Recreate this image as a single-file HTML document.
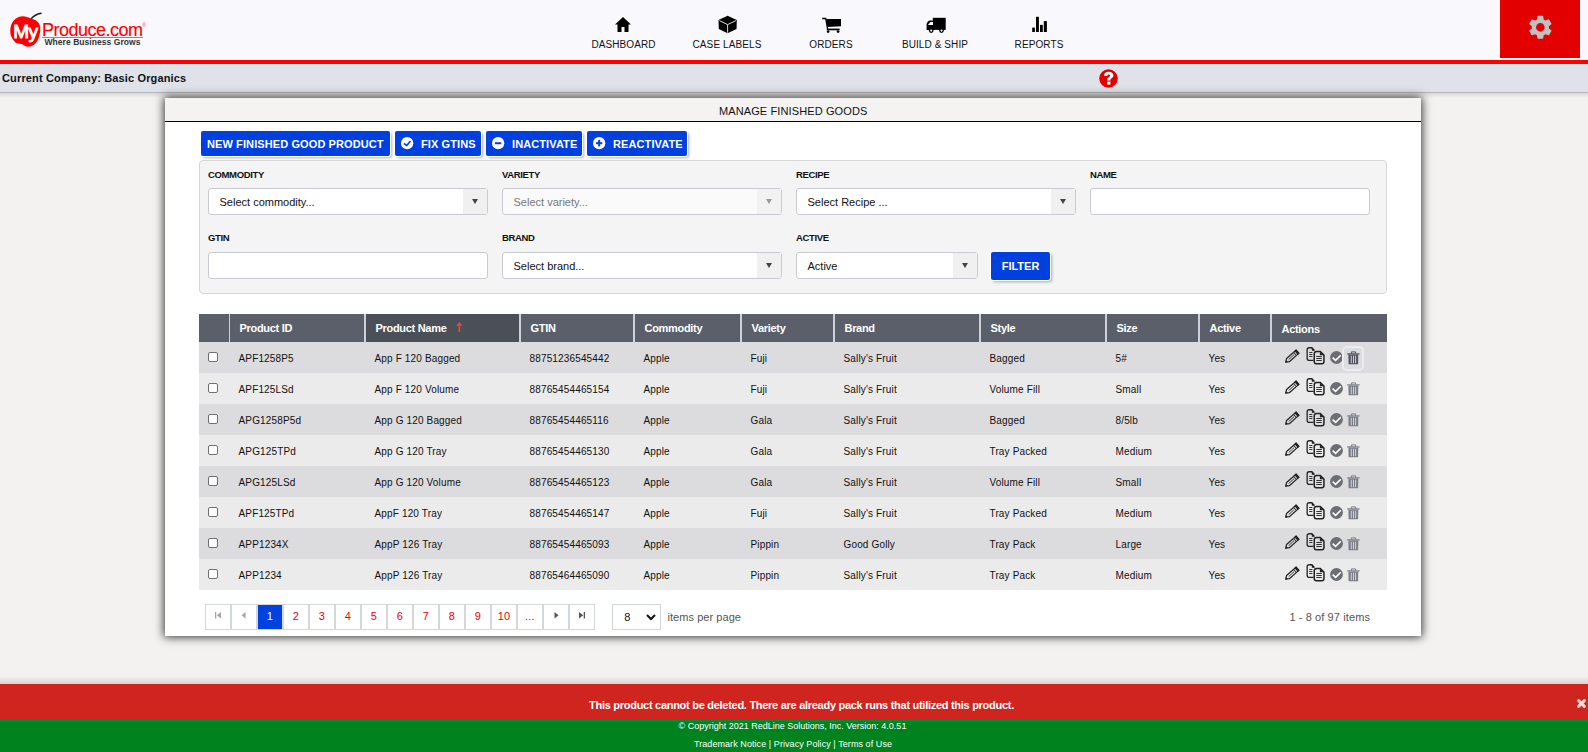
<!DOCTYPE html>
<html><head><meta charset="utf-8">
<style>
*{box-sizing:border-box;margin:0;padding:0}
html,body{width:1588px;height:752px;overflow:hidden;background:#f3f2f0;font-family:"Liberation Sans", sans-serif;color:#000}
body{position:relative}
.t{position:absolute;white-space:nowrap}
.b{position:absolute}
svg{position:absolute;overflow:visible}
</style></head><body>
<div class="b" style="left:0px;top:0px;width:1588px;height:60px;background:#f9f9fd"></div>
<div class="b" style="left:0px;top:60px;width:1588px;height:4px;background:#fe0000"></div>
<div class="b" style="left:0px;top:64px;width:1588px;height:29px;background:#dfe2e9;border-bottom:1px solid #b4b7bd"></div>
<div class="b" style="left:0px;top:93px;width:1588px;height:5px;background:linear-gradient(#d9d8d6,#f3f2f0)"></div>
<div class="t" style="left:2px;top:72.69px;font-size:11px;line-height:11px;font-weight:bold;color:#111;letter-spacing:0.15px;">Current Company: Basic Organics</div>
<svg style="left:0;top:0" width="160" height="60" viewBox="0 0 160 60">
<path d="M31 19 C33.5 16 37 14 41 13.3" stroke="#222" stroke-width="1.5" fill="none" stroke-linecap="round"/>
<path d="M39 13.6 L41.3 13 L41 14.3 Z" fill="#222"/>
<path d="M21.4 16.4 C25 16 28.5 17.5 31 18.8 C32.5 19 33.5 19.4 34.7 19.8 C38.5 21.5 40.8 25.5 40.3 30 C40 35 38.5 40 35.8 43 C33 46 30 47 27.3 46.7 C25 46.5 23.5 44.5 21.4 44 C19 43.5 16.5 43.5 15 41.9 C11.5 38.5 10 34.5 10.3 30.5 C10.5 22 15.5 16.8 21.4 16.4 Z" fill="#fe0000"/>
</svg>
<div class="t" style="left:13.2px;top:21.62px;font-size:19px;line-height:19px;color:#fff;letter-spacing:-0.6px;-webkit-text-stroke:0.9px #fff;">My</div>
<div class="t" style="left:42px;top:20.56px;font-size:18px;line-height:18px;color:#fe0000;letter-spacing:-0.5px;-webkit-text-stroke:0.15px #fe0000;">Produce.com</div>
<div class="b" style="left:42px;top:37px;width:101px;height:1px;background:#8a8a8a"></div>
<div class="t" style="left:44.5px;top:37.60px;font-size:8.5px;line-height:8.5px;font-weight:bold;color:#333;letter-spacing:0.05px;">Where Business Grows</div>
<div class="t" style="left:142.3px;top:22.77px;font-size:5px;line-height:5px;color:#f44;">&#174;</div>
<svg style="left:615.1px;top:17px" width="16" height="15" viewBox="0 0 16 15"><path d="M8 0 L16 7.5 L13.5 7.5 L13.5 15 L9.5 15 L9.5 10 L6.5 10 L6.5 15 L2.5 15 L2.5 7.5 L0 7.5 Z" fill="#000"/></svg>
<div class="t" style="left:563.5px;width:120px;text-align:center;top:40.03px;font-size:10px;line-height:10px;color:#111;letter-spacing:0.1px;">DASHBOARD</div>
<div class="t" style="left:667.0px;width:120px;text-align:center;top:40.03px;font-size:10px;line-height:10px;color:#111;letter-spacing:0.1px;">CASE LABELS</div>
<div class="t" style="left:771.0px;width:120px;text-align:center;top:40.03px;font-size:10px;line-height:10px;color:#111;letter-spacing:0.1px;">ORDERS</div>
<div class="t" style="left:875.0px;width:120px;text-align:center;top:40.03px;font-size:10px;line-height:10px;color:#111;letter-spacing:0.1px;">BUILD &amp; SHIP</div>
<div class="t" style="left:979.0px;width:120px;text-align:center;top:40.03px;font-size:10px;line-height:10px;color:#111;letter-spacing:0.1px;">REPORTS</div>
<svg style="left:815px;top:10px" width="40" height="30" viewBox="0 0 40 30">
<path d="M7.2 8.5 L10.7 8.5 L12.6 19.2" stroke="#000" stroke-width="1.3" fill="none"/>
<path d="M11.1 9.1 L26 9.1 L26 16.3 L12.4 17.1 Z" fill="#000"/>
<rect x="11.8" y="18.6" width="12.8" height="1.7" fill="#000"/>
<circle cx="13.1" cy="21.6" r="1.35" fill="#000"/><circle cx="23.1" cy="21.6" r="1.35" fill="#000"/>
</svg>
<svg style="left:1025px;top:12px" width="30" height="24" viewBox="0 0 30 24"><rect x="7.2" y="15.6" width="2.7" height="4.4" fill="#000"/><rect x="11" y="4.8" width="2.9" height="15.2" fill="#000"/><rect x="15" y="12.9" width="2.8" height="7.1" fill="#000"/><rect x="18.8" y="9.1" width="3.1" height="10.9" fill="#000"/></svg>
<svg style="left:710px;top:10px" width="30" height="26" viewBox="0 0 30 26"><path d="M17.6 5.7 L26.8 10 L26.5 19 L17.6 23.2 L8.8 19 L8.5 10 Z" fill="#000"/><path d="M9.4 10.6 L17.6 14.6 L25.9 10.6" stroke="#fff" stroke-width="0.85" fill="none"/><path d="M17.6 14.6 L17.6 22.8" stroke="#fff" stroke-width="0.85"/></svg>
<svg style="left:920px;top:10px" width="40" height="30" viewBox="0 0 40 30">
<rect x="12.8" y="7.8" width="12.9" height="12.1" fill="#000"/>
<path d="M6.6 20 L6.6 14.5 C6.6 12.6 8.4 10.6 10.2 10.6 L13 10.6 L13 20 Z" fill="#000"/>
<path d="M7.9 15 L10.4 11.9 L13 11.9 L13 15 Z" fill="#fff"/>
<circle cx="11.2" cy="20.6" r="2.35" fill="#000"/><circle cx="21.5" cy="20.6" r="2.35" fill="#000"/>
<circle cx="11.2" cy="20.6" r="1.05" fill="#fff"/><circle cx="21.5" cy="20.6" r="1.05" fill="#fff"/>
</svg>
<div class="b" style="left:1500px;top:0px;width:80px;height:58px;background:#e30000"></div>
<svg style="left:1525.95px;top:13.15px" width="28.7" height="28.7" viewBox="0 0 24 24"><path fill="#c1c1c1" d="M19.14 12.94c.04-.3.06-.61.06-.94 0-.32-.02-.64-.07-.94l2.03-1.58a.49.49 0 0 0 .12-.61l-1.92-3.32a.488.488 0 0 0-.59-.22l-2.39.96c-.5-.38-1.03-.7-1.62-.94l-.36-2.54a.484.484 0 0 0-.48-.41h-3.84c-.24 0-.43.17-.47.41l-.36 2.540c-.59.24-1.13.57-1.62.94l-2.39-.96c-.22-.08-.47 0-.59.22L2.74 8.87c-.12.21-.08.47.12.61l2.03 1.58c-.05.3-.09.63-.09.94s.02.64.07.94l-2.03 1.58a.49.49 0 0 0-.12.61l1.92 3.32c.12.22.37.29.59.22l2.39-.96c.5.38 1.030.7 1.62.94l.36 2.54c.05.24.24.41.48.41h3.84c.24 0 .44-.17.47-.41l.36-2.54c.59-.24 1.13-.56 1.62-.94l2.39.96c.22.08.47 0 .59-.22l1.92-3.32c.12-.22.07-.47-.12-.61l-2.01-1.58zM12 15.6c-1.98 0-3.6-1.62-3.6-3.6s1.62-3.6 3.6-3.6 3.6 1.62 3.6 3.6-1.62 3.6-3.6 3.6z"/></svg>
<svg style="left:1099px;top:68.5px" width="19" height="19" viewBox="0 0 19 19"><circle cx="9.5" cy="9.5" r="9.3" fill="#e30000"/><path d="M5 6.8 C5 4.2 7 2.8 9.6 2.8 C12.4 2.8 14.4 4.4 14.4 6.6 C14.4 9 11.4 9.4 11.4 11 L11.4 11.4 L8.2 11.4 L8.2 10.6 C8.2 8.2 11.1 7.9 11.1 6.7 C11.1 6 10.5 5.5 9.6 5.5 C8.7 5.5 8.2 6.1 8.2 6.9 Z" fill="#fff"/><rect x="8.2" y="12.6" width="3.2" height="3" fill="#fff"/></svg>
<div class="b" style="left:165px;top:98px;width:1256px;height:538px;background:#fff;box-shadow:0 0 9px 1px rgba(0,0,0,.8)"></div>
<div class="b" style="left:165px;top:98px;width:1256px;height:23px;background:#f4f3f1"></div>
<div class="b" style="left:165px;top:121px;width:1256px;height:1px;background:#000"></div>
<div class="t" style="left:643.2px;width:300px;text-align:center;top:105.69px;font-size:11px;line-height:11px;color:#111;letter-spacing:0.12px;">MANAGE FINISHED GOODS</div>
<div class="b" style="left:201px;top:131px;width:189px;height:25px;background:#0040df;border-radius:2px;box-shadow:0 0 0 1px #fff,2px 2px 3px rgba(0,0,0,.3)"></div>
<div class="t" style="left:207px;top:138.69px;font-size:11px;line-height:11px;font-weight:bold;color:#fff;letter-spacing:0.1px;">NEW FINISHED GOOD PRODUCT</div>
<div class="b" style="left:395px;top:131px;width:86px;height:25px;background:#0040df;border-radius:2px;box-shadow:0 0 0 1px #fff,2px 2px 3px rgba(0,0,0,.3)"></div>
<svg style="left:400.95000000000005px;top:136.8px" width="12.3" height="12.3" viewBox="0 0 12.3 12.3"><circle cx="6.15" cy="6.15" r="6.15" fill="#fff"/><path d="M2.9 6.5 L5.85 8.5 L9.4 4.1" stroke="#0040df" stroke-width="1.6" fill="none"/></svg>
<div class="t" style="left:421px;top:138.69px;font-size:11px;line-height:11px;font-weight:bold;color:#fff;letter-spacing:0.1px;">FIX GTINS</div>
<div class="b" style="left:486px;top:131px;width:96px;height:25px;background:#0040df;border-radius:2px;box-shadow:0 0 0 1px #fff,2px 2px 3px rgba(0,0,0,.3)"></div>
<svg style="left:491.95000000000005px;top:136.8px" width="12.3" height="12.3" viewBox="0 0 12.3 12.3"><circle cx="6.15" cy="6.15" r="6.15" fill="#fff"/><rect x="3" y="5.2" width="6.3" height="2" fill="#0040df"/></svg>
<div class="t" style="left:512px;top:138.69px;font-size:11px;line-height:11px;font-weight:bold;color:#fff;letter-spacing:0.1px;">INACTIVATE</div>
<div class="b" style="left:587px;top:131px;width:100px;height:25px;background:#0040df;border-radius:2px;box-shadow:0 0 0 1px #fff,2px 2px 3px rgba(0,0,0,.3)"></div>
<svg style="left:592.95px;top:136.8px" width="12.3" height="12.3" viewBox="0 0 12.3 12.3"><circle cx="6.15" cy="6.15" r="6.15" fill="#fff"/><rect x="3" y="5.2" width="6.3" height="2" fill="#0040df"/><rect x="5.15" y="3" width="2" height="6.4" fill="#0040df"/></svg>
<div class="t" style="left:613px;top:138.69px;font-size:11px;line-height:11px;font-weight:bold;color:#fff;letter-spacing:0.1px;">REACTIVATE</div>
<div class="b" style="left:199px;top:160px;width:1188px;height:134px;background:#f4f4f4;border:1px solid #d6d6d6;border-radius:4px"></div>
<div class="t" style="left:208px;top:169.96px;font-size:9.5px;line-height:9.5px;font-weight:bold;color:#111;letter-spacing:-0.35px;">COMMODITY</div>
<div class="t" style="left:502px;top:169.96px;font-size:9.5px;line-height:9.5px;font-weight:bold;color:#111;letter-spacing:-0.35px;">VARIETY</div>
<div class="t" style="left:796px;top:169.96px;font-size:9.5px;line-height:9.5px;font-weight:bold;color:#111;letter-spacing:-0.35px;">RECIPE</div>
<div class="t" style="left:1090px;top:169.96px;font-size:9.5px;line-height:9.5px;font-weight:bold;color:#111;letter-spacing:-0.35px;">NAME</div>
<div class="t" style="left:208px;top:232.96px;font-size:9.5px;line-height:9.5px;font-weight:bold;color:#111;letter-spacing:-0.35px;">GTIN</div>
<div class="t" style="left:502px;top:232.96px;font-size:9.5px;line-height:9.5px;font-weight:bold;color:#111;letter-spacing:-0.35px;">BRAND</div>
<div class="t" style="left:796px;top:232.96px;font-size:9.5px;line-height:9.5px;font-weight:bold;color:#111;letter-spacing:-0.35px;">ACTIVE</div>
<div class="b" style="left:208px;top:188px;width:280px;height:27px;background:#fff;border:1px solid #c8ccd2;border-radius:3px;overflow:hidden"></div>
<div class="b" style="left:463px;top:189px;width:24px;height:25px;background:#f0f0f0"></div>
<svg style="left:472px;top:199px" width="6" height="5" viewBox="0 0 6 5"><path d="M0 0 L6 0 L3 5 Z" fill="#444"/></svg>
<div class="t" style="left:219.5px;top:197.19px;font-size:11px;line-height:11px;color:#111;">Select commodity...</div>
<div class="b" style="left:502px;top:188px;width:280px;height:27px;background:#fafafa;border:1px solid #c8ccd2;border-radius:3px;overflow:hidden"></div>
<div class="b" style="left:757px;top:189px;width:24px;height:25px;background:#f2f2f2"></div>
<svg style="left:766px;top:199px" width="6" height="5" viewBox="0 0 6 5"><path d="M0 0 L6 0 L3 5 Z" fill="#999"/></svg>
<div class="t" style="left:513.5px;top:197.19px;font-size:11px;line-height:11px;color:#777;">Select variety...</div>
<div class="b" style="left:796px;top:188px;width:280px;height:27px;background:#fff;border:1px solid #c8ccd2;border-radius:3px;overflow:hidden"></div>
<div class="b" style="left:1051px;top:189px;width:24px;height:25px;background:#f0f0f0"></div>
<svg style="left:1060px;top:199px" width="6" height="5" viewBox="0 0 6 5"><path d="M0 0 L6 0 L3 5 Z" fill="#444"/></svg>
<div class="t" style="left:807.5px;top:197.19px;font-size:11px;line-height:11px;color:#111;">Select Recipe ...</div>
<div class="b" style="left:1090px;top:188px;width:280px;height:27px;background:#fff;border:1px solid #c8ccd2;border-radius:3px"></div>
<div class="b" style="left:208px;top:252px;width:280px;height:27px;background:#fff;border:1px solid #c8ccd2;border-radius:3px"></div>
<div class="b" style="left:502px;top:252px;width:280px;height:27px;background:#fff;border:1px solid #c8ccd2;border-radius:3px;overflow:hidden"></div>
<div class="b" style="left:757px;top:253px;width:24px;height:25px;background:#f0f0f0"></div>
<svg style="left:766px;top:263px" width="6" height="5" viewBox="0 0 6 5"><path d="M0 0 L6 0 L3 5 Z" fill="#444"/></svg>
<div class="t" style="left:513.5px;top:261.19px;font-size:11px;line-height:11px;color:#111;">Select brand...</div>
<div class="b" style="left:796px;top:252px;width:182px;height:27px;background:#fff;border:1px solid #c8ccd2;border-radius:3px;overflow:hidden"></div>
<div class="b" style="left:953px;top:253px;width:24px;height:25px;background:#f0f0f0"></div>
<svg style="left:962px;top:263px" width="6" height="5" viewBox="0 0 6 5"><path d="M0 0 L6 0 L3 5 Z" fill="#444"/></svg>
<div class="t" style="left:807.5px;top:261.19px;font-size:11px;line-height:11px;color:#111;">Active</div>
<div class="b" style="left:991px;top:252px;width:59px;height:28px;background:#0040df;border-radius:2px;box-shadow:0 0 0 1px #fff,2px 2px 3px rgba(0,0,0,.3)"></div>
<div class="t" style="left:980.5px;width:80px;text-align:center;top:260.69px;font-size:11px;line-height:11px;font-weight:bold;color:#fff;">FILTER</div>
<div class="b" style="left:199px;top:314px;width:1188px;height:28px;background:#5a5f69"></div>
<div class="b" style="left:365px;top:314px;width:154px;height:28px;background:#4b5058"></div>
<div class="b" style="left:229px;top:314px;width:1px;height:28px;background:#cdd2d9"></div>
<div class="b" style="left:364px;top:314px;width:2px;height:28px;background:#cdd2d9"></div>
<div class="b" style="left:519px;top:314px;width:2px;height:28px;background:#cdd2d9"></div>
<div class="b" style="left:633px;top:314px;width:2px;height:28px;background:#cdd2d9"></div>
<div class="b" style="left:740px;top:314px;width:2px;height:28px;background:#cdd2d9"></div>
<div class="b" style="left:833px;top:314px;width:2px;height:28px;background:#cdd2d9"></div>
<div class="b" style="left:979px;top:314px;width:2px;height:28px;background:#cdd2d9"></div>
<div class="b" style="left:1105px;top:314px;width:2px;height:28px;background:#cdd2d9"></div>
<div class="b" style="left:1198px;top:314px;width:2px;height:28px;background:#cdd2d9"></div>
<div class="b" style="left:1270px;top:314px;width:2px;height:28px;background:#cdd2d9"></div>
<div class="t" style="left:239.5px;top:322.69px;font-size:11px;line-height:11px;font-weight:bold;color:#fff;letter-spacing:-0.3px;">Product ID</div>
<div class="t" style="left:375.5px;top:322.69px;font-size:11px;line-height:11px;font-weight:bold;color:#fff;letter-spacing:-0.3px;">Product Name</div>
<div class="t" style="left:530.5px;top:322.69px;font-size:11px;line-height:11px;font-weight:bold;color:#fff;letter-spacing:-0.3px;">GTIN</div>
<div class="t" style="left:644.5px;top:322.69px;font-size:11px;line-height:11px;font-weight:bold;color:#fff;letter-spacing:-0.3px;">Commodity</div>
<div class="t" style="left:751.5px;top:322.69px;font-size:11px;line-height:11px;font-weight:bold;color:#fff;letter-spacing:-0.3px;">Variety</div>
<div class="t" style="left:844.5px;top:322.69px;font-size:11px;line-height:11px;font-weight:bold;color:#fff;letter-spacing:-0.3px;">Brand</div>
<div class="t" style="left:990.5px;top:322.69px;font-size:11px;line-height:11px;font-weight:bold;color:#fff;letter-spacing:-0.3px;">Style</div>
<div class="t" style="left:1116.5px;top:322.69px;font-size:11px;line-height:11px;font-weight:bold;color:#fff;letter-spacing:-0.3px;">Size</div>
<div class="t" style="left:1209.5px;top:322.69px;font-size:11px;line-height:11px;font-weight:bold;color:#fff;letter-spacing:-0.3px;">Active</div>
<div class="t" style="left:1281.5px;top:323.69px;font-size:11px;line-height:11px;font-weight:bold;color:#fff;letter-spacing:-0.3px;">Actions</div>
<svg style="left:456px;top:322px" width="6.5" height="10" viewBox="0 0 6.5 10"><path d="M3.25 0 L6.5 3.8 L4.1 3.8 L4.1 10 L2.4 10 L2.4 3.8 L0 3.8 Z" fill="#ef4436"/></svg>
<div class="b" style="left:199px;top:342px;width:1188px;height:31px;background:#dcdcdf"></div>
<div class="b" style="left:208px;top:352.2px;width:10px;height:10px;background:#fff;border:1px solid #6f6f6f;border-radius:2px"></div>
<div class="t" style="left:238.5px;top:354.04px;font-size:10px;line-height:10px;color:#111;letter-spacing:0.15px;">APF1258P5</div>
<div class="t" style="left:374.5px;top:354.04px;font-size:10px;line-height:10px;color:#111;letter-spacing:0.15px;">App F 120 Bagged</div>
<div class="t" style="left:529.5px;top:354.04px;font-size:10px;line-height:10px;color:#111;letter-spacing:0.15px;">88751236545442</div>
<div class="t" style="left:643.5px;top:354.04px;font-size:10px;line-height:10px;color:#111;letter-spacing:0.15px;">Apple</div>
<div class="t" style="left:750.5px;top:354.04px;font-size:10px;line-height:10px;color:#111;letter-spacing:0.15px;">Fuji</div>
<div class="t" style="left:843.5px;top:354.04px;font-size:10px;line-height:10px;color:#111;letter-spacing:0.15px;">Sally's Fruit</div>
<div class="t" style="left:989.5px;top:354.04px;font-size:10px;line-height:10px;color:#111;letter-spacing:0.15px;">Bagged</div>
<div class="t" style="left:1115.5px;top:354.04px;font-size:10px;line-height:10px;color:#111;letter-spacing:0.15px;">5#</div>
<div class="t" style="left:1208.5px;top:354.04px;font-size:10px;line-height:10px;color:#111;letter-spacing:0.15px;">Yes</div>
<svg style="left:1282px;top:342px" width="46" height="31" viewBox="0 0 46 31">
<g transform="translate(3.4 20.4) rotate(-41.5)">
<path d="M0.4 0 L3.4 -2.1 L16 -2.1 L16 2.1 L3.4 2.1 Z" fill="none" stroke="#222" stroke-width="1.2" stroke-linejoin="round"/>
<rect x="14.3" y="-2.7" width="2.4" height="5.4" fill="#222"/>
<rect x="12.2" y="-2.4" width="1" height="4.8" fill="#333"/>
<path d="M4.4 0 L11.6 0" stroke="#333" stroke-width="0.9"/>
<path d="M0 0 L2 -1.4 L2 1.4 Z" fill="#222"/>
</g>
<path d="M32.4 8.4 L29.9 5.75 L27.2 5.75 C26 5.75 25.15 6.6 25.15 7.8 L25.15 16.2 C25.15 17.4 26 18.35 27.2 18.35 L31.5 18.35" fill="none" stroke="#222" stroke-width="1.3"/>
<path d="M29.6 5.4 L32.9 8.8 L29.9 8.8 Z" fill="#222"/>
<rect x="27.2" y="10" width="3.2" height="1" fill="#333"/>
<rect x="27.2" y="12" width="3.2" height="1" fill="#333"/>
<rect x="27.2" y="14" width="3.2" height="1" fill="#333"/>
<path d="M34.5 9.45 L38.3 9.45 L41.95 13 L41.95 19.6 C41.95 20.9 41 21.85 39.8 21.85 L34.5 21.85 C33.3 21.85 32.25 20.9 32.25 19.6 L32.25 11.7 C32.25 10.5 33.3 9.45 34.5 9.45 Z" fill="#dcdcdf" stroke="#222" stroke-width="1.5"/>
<path d="M37.9 9.6 L41.8 13.2 L37.9 13.2 Z" fill="#222"/>
<rect x="34.3" y="14" width="5.5" height="1" fill="#333"/>
<rect x="34.3" y="16" width="5.5" height="1" fill="#333"/>
<rect x="34.3" y="18" width="5.5" height="1" fill="#333"/>
</svg>
<svg style="left:1329.75px;top:350.8px" width="13" height="13" viewBox="0 0 13 13"><circle cx="6.5" cy="6.5" r="6.4" fill="#6b6e73"/><path d="M2.6 6.6 L5.6 9.4 L10.8 4.3" stroke="#fff" stroke-width="1.6" fill="none"/></svg>
<div class="b" style="left:1342px;top:346.2px;width:22.4px;height:24.6px;border:2.5px solid #ededef;border-radius:5px;background:#dcdde0"></div>
<svg style="left:1347px;top:350.5px" width="13" height="14" viewBox="0 0 13 14"><path d="M4.4 2.6 L4.4 0.9 L8.6 0.9 L8.6 2.6" stroke="#4f535b" stroke-width="1" fill="none"/><rect x="0.1" y="2.3" width="12.5" height="1.2" fill="#4f535b"/><path d="M1.4 3.4 L11.3 3.4 L11.1 13.3 L1.6 13.3 Z" fill="#4f535b"/><rect x="3.8" y="4.7" width="0.9" height="7.5" fill="#dcdce0"/><rect x="6" y="4.7" width="0.9" height="7.5" fill="#dcdce0"/><rect x="8.2" y="4.7" width="0.9" height="7.5" fill="#dcdce0"/></svg>
<div class="b" style="left:199px;top:373px;width:1188px;height:31px;background:#ebebeb"></div>
<div class="b" style="left:208px;top:383.2px;width:10px;height:10px;background:#fff;border:1px solid #6f6f6f;border-radius:2px"></div>
<div class="t" style="left:238.5px;top:385.04px;font-size:10px;line-height:10px;color:#111;letter-spacing:0.15px;">APF125LSd</div>
<div class="t" style="left:374.5px;top:385.04px;font-size:10px;line-height:10px;color:#111;letter-spacing:0.15px;">App F 120 Volume</div>
<div class="t" style="left:529.5px;top:385.04px;font-size:10px;line-height:10px;color:#111;letter-spacing:0.15px;">88765454465154</div>
<div class="t" style="left:643.5px;top:385.04px;font-size:10px;line-height:10px;color:#111;letter-spacing:0.15px;">Apple</div>
<div class="t" style="left:750.5px;top:385.04px;font-size:10px;line-height:10px;color:#111;letter-spacing:0.15px;">Fuji</div>
<div class="t" style="left:843.5px;top:385.04px;font-size:10px;line-height:10px;color:#111;letter-spacing:0.15px;">Sally's Fruit</div>
<div class="t" style="left:989.5px;top:385.04px;font-size:10px;line-height:10px;color:#111;letter-spacing:0.15px;">Volume Fill</div>
<div class="t" style="left:1115.5px;top:385.04px;font-size:10px;line-height:10px;color:#111;letter-spacing:0.15px;">Small</div>
<div class="t" style="left:1208.5px;top:385.04px;font-size:10px;line-height:10px;color:#111;letter-spacing:0.15px;">Yes</div>
<svg style="left:1282px;top:373px" width="46" height="31" viewBox="0 0 46 31">
<g transform="translate(3.4 20.4) rotate(-41.5)">
<path d="M0.4 0 L3.4 -2.1 L16 -2.1 L16 2.1 L3.4 2.1 Z" fill="none" stroke="#222" stroke-width="1.2" stroke-linejoin="round"/>
<rect x="14.3" y="-2.7" width="2.4" height="5.4" fill="#222"/>
<rect x="12.2" y="-2.4" width="1" height="4.8" fill="#333"/>
<path d="M4.4 0 L11.6 0" stroke="#333" stroke-width="0.9"/>
<path d="M0 0 L2 -1.4 L2 1.4 Z" fill="#222"/>
</g>
<path d="M32.4 8.4 L29.9 5.75 L27.2 5.75 C26 5.75 25.15 6.6 25.15 7.8 L25.15 16.2 C25.15 17.4 26 18.35 27.2 18.35 L31.5 18.35" fill="none" stroke="#222" stroke-width="1.3"/>
<path d="M29.6 5.4 L32.9 8.8 L29.9 8.8 Z" fill="#222"/>
<rect x="27.2" y="10" width="3.2" height="1" fill="#333"/>
<rect x="27.2" y="12" width="3.2" height="1" fill="#333"/>
<rect x="27.2" y="14" width="3.2" height="1" fill="#333"/>
<path d="M34.5 9.45 L38.3 9.45 L41.95 13 L41.95 19.6 C41.95 20.9 41 21.85 39.8 21.85 L34.5 21.85 C33.3 21.85 32.25 20.9 32.25 19.6 L32.25 11.7 C32.25 10.5 33.3 9.45 34.5 9.45 Z" fill="#ebebeb" stroke="#222" stroke-width="1.5"/>
<path d="M37.9 9.6 L41.8 13.2 L37.9 13.2 Z" fill="#222"/>
<rect x="34.3" y="14" width="5.5" height="1" fill="#333"/>
<rect x="34.3" y="16" width="5.5" height="1" fill="#333"/>
<rect x="34.3" y="18" width="5.5" height="1" fill="#333"/>
</svg>
<svg style="left:1329.75px;top:381.8px" width="13" height="13" viewBox="0 0 13 13"><circle cx="6.5" cy="6.5" r="6.4" fill="#6b6e73"/><path d="M2.6 6.6 L5.6 9.4 L10.8 4.3" stroke="#fff" stroke-width="1.6" fill="none"/></svg>
<svg style="left:1347px;top:381.5px" width="13" height="14" viewBox="0 0 13 14"><path d="M4.4 2.6 L4.4 0.9 L8.6 0.9 L8.6 2.6" stroke="#7a7e86" stroke-width="1" fill="none"/><rect x="0.1" y="2.3" width="12.5" height="1.2" fill="#7a7e86"/><path d="M1.4 3.4 L11.3 3.4 L11.1 13.3 L1.6 13.3 Z" fill="#7a7e86"/><rect x="3.8" y="4.7" width="0.9" height="7.5" fill="#dcdce0"/><rect x="6" y="4.7" width="0.9" height="7.5" fill="#dcdce0"/><rect x="8.2" y="4.7" width="0.9" height="7.5" fill="#dcdce0"/></svg>
<div class="b" style="left:199px;top:404px;width:1188px;height:31px;background:#dcdcdf"></div>
<div class="b" style="left:208px;top:414.2px;width:10px;height:10px;background:#fff;border:1px solid #6f6f6f;border-radius:2px"></div>
<div class="t" style="left:238.5px;top:416.04px;font-size:10px;line-height:10px;color:#111;letter-spacing:0.15px;">APG1258P5d</div>
<div class="t" style="left:374.5px;top:416.04px;font-size:10px;line-height:10px;color:#111;letter-spacing:0.15px;">App G 120 Bagged</div>
<div class="t" style="left:529.5px;top:416.04px;font-size:10px;line-height:10px;color:#111;letter-spacing:0.15px;">88765454465116</div>
<div class="t" style="left:643.5px;top:416.04px;font-size:10px;line-height:10px;color:#111;letter-spacing:0.15px;">Apple</div>
<div class="t" style="left:750.5px;top:416.04px;font-size:10px;line-height:10px;color:#111;letter-spacing:0.15px;">Gala</div>
<div class="t" style="left:843.5px;top:416.04px;font-size:10px;line-height:10px;color:#111;letter-spacing:0.15px;">Sally's Fruit</div>
<div class="t" style="left:989.5px;top:416.04px;font-size:10px;line-height:10px;color:#111;letter-spacing:0.15px;">Bagged</div>
<div class="t" style="left:1115.5px;top:416.04px;font-size:10px;line-height:10px;color:#111;letter-spacing:0.15px;">8/5lb</div>
<div class="t" style="left:1208.5px;top:416.04px;font-size:10px;line-height:10px;color:#111;letter-spacing:0.15px;">Yes</div>
<svg style="left:1282px;top:404px" width="46" height="31" viewBox="0 0 46 31">
<g transform="translate(3.4 20.4) rotate(-41.5)">
<path d="M0.4 0 L3.4 -2.1 L16 -2.1 L16 2.1 L3.4 2.1 Z" fill="none" stroke="#222" stroke-width="1.2" stroke-linejoin="round"/>
<rect x="14.3" y="-2.7" width="2.4" height="5.4" fill="#222"/>
<rect x="12.2" y="-2.4" width="1" height="4.8" fill="#333"/>
<path d="M4.4 0 L11.6 0" stroke="#333" stroke-width="0.9"/>
<path d="M0 0 L2 -1.4 L2 1.4 Z" fill="#222"/>
</g>
<path d="M32.4 8.4 L29.9 5.75 L27.2 5.75 C26 5.75 25.15 6.6 25.15 7.8 L25.15 16.2 C25.15 17.4 26 18.35 27.2 18.35 L31.5 18.35" fill="none" stroke="#222" stroke-width="1.3"/>
<path d="M29.6 5.4 L32.9 8.8 L29.9 8.8 Z" fill="#222"/>
<rect x="27.2" y="10" width="3.2" height="1" fill="#333"/>
<rect x="27.2" y="12" width="3.2" height="1" fill="#333"/>
<rect x="27.2" y="14" width="3.2" height="1" fill="#333"/>
<path d="M34.5 9.45 L38.3 9.45 L41.95 13 L41.95 19.6 C41.95 20.9 41 21.85 39.8 21.85 L34.5 21.85 C33.3 21.85 32.25 20.9 32.25 19.6 L32.25 11.7 C32.25 10.5 33.3 9.45 34.5 9.45 Z" fill="#dcdcdf" stroke="#222" stroke-width="1.5"/>
<path d="M37.9 9.6 L41.8 13.2 L37.9 13.2 Z" fill="#222"/>
<rect x="34.3" y="14" width="5.5" height="1" fill="#333"/>
<rect x="34.3" y="16" width="5.5" height="1" fill="#333"/>
<rect x="34.3" y="18" width="5.5" height="1" fill="#333"/>
</svg>
<svg style="left:1329.75px;top:412.8px" width="13" height="13" viewBox="0 0 13 13"><circle cx="6.5" cy="6.5" r="6.4" fill="#6b6e73"/><path d="M2.6 6.6 L5.6 9.4 L10.8 4.3" stroke="#fff" stroke-width="1.6" fill="none"/></svg>
<svg style="left:1347px;top:412.5px" width="13" height="14" viewBox="0 0 13 14"><path d="M4.4 2.6 L4.4 0.9 L8.6 0.9 L8.6 2.6" stroke="#7a7e86" stroke-width="1" fill="none"/><rect x="0.1" y="2.3" width="12.5" height="1.2" fill="#7a7e86"/><path d="M1.4 3.4 L11.3 3.4 L11.1 13.3 L1.6 13.3 Z" fill="#7a7e86"/><rect x="3.8" y="4.7" width="0.9" height="7.5" fill="#dcdce0"/><rect x="6" y="4.7" width="0.9" height="7.5" fill="#dcdce0"/><rect x="8.2" y="4.7" width="0.9" height="7.5" fill="#dcdce0"/></svg>
<div class="b" style="left:199px;top:435px;width:1188px;height:31px;background:#ebebeb"></div>
<div class="b" style="left:208px;top:445.2px;width:10px;height:10px;background:#fff;border:1px solid #6f6f6f;border-radius:2px"></div>
<div class="t" style="left:238.5px;top:447.04px;font-size:10px;line-height:10px;color:#111;letter-spacing:0.15px;">APG125TPd</div>
<div class="t" style="left:374.5px;top:447.04px;font-size:10px;line-height:10px;color:#111;letter-spacing:0.15px;">App G 120 Tray</div>
<div class="t" style="left:529.5px;top:447.04px;font-size:10px;line-height:10px;color:#111;letter-spacing:0.15px;">88765454465130</div>
<div class="t" style="left:643.5px;top:447.04px;font-size:10px;line-height:10px;color:#111;letter-spacing:0.15px;">Apple</div>
<div class="t" style="left:750.5px;top:447.04px;font-size:10px;line-height:10px;color:#111;letter-spacing:0.15px;">Gala</div>
<div class="t" style="left:843.5px;top:447.04px;font-size:10px;line-height:10px;color:#111;letter-spacing:0.15px;">Sally's Fruit</div>
<div class="t" style="left:989.5px;top:447.04px;font-size:10px;line-height:10px;color:#111;letter-spacing:0.15px;">Tray Packed</div>
<div class="t" style="left:1115.5px;top:447.04px;font-size:10px;line-height:10px;color:#111;letter-spacing:0.15px;">Medium</div>
<div class="t" style="left:1208.5px;top:447.04px;font-size:10px;line-height:10px;color:#111;letter-spacing:0.15px;">Yes</div>
<svg style="left:1282px;top:435px" width="46" height="31" viewBox="0 0 46 31">
<g transform="translate(3.4 20.4) rotate(-41.5)">
<path d="M0.4 0 L3.4 -2.1 L16 -2.1 L16 2.1 L3.4 2.1 Z" fill="none" stroke="#222" stroke-width="1.2" stroke-linejoin="round"/>
<rect x="14.3" y="-2.7" width="2.4" height="5.4" fill="#222"/>
<rect x="12.2" y="-2.4" width="1" height="4.8" fill="#333"/>
<path d="M4.4 0 L11.6 0" stroke="#333" stroke-width="0.9"/>
<path d="M0 0 L2 -1.4 L2 1.4 Z" fill="#222"/>
</g>
<path d="M32.4 8.4 L29.9 5.75 L27.2 5.75 C26 5.75 25.15 6.6 25.15 7.8 L25.15 16.2 C25.15 17.4 26 18.35 27.2 18.35 L31.5 18.35" fill="none" stroke="#222" stroke-width="1.3"/>
<path d="M29.6 5.4 L32.9 8.8 L29.9 8.8 Z" fill="#222"/>
<rect x="27.2" y="10" width="3.2" height="1" fill="#333"/>
<rect x="27.2" y="12" width="3.2" height="1" fill="#333"/>
<rect x="27.2" y="14" width="3.2" height="1" fill="#333"/>
<path d="M34.5 9.45 L38.3 9.45 L41.95 13 L41.95 19.6 C41.95 20.9 41 21.85 39.8 21.85 L34.5 21.85 C33.3 21.85 32.25 20.9 32.25 19.6 L32.25 11.7 C32.25 10.5 33.3 9.45 34.5 9.45 Z" fill="#ebebeb" stroke="#222" stroke-width="1.5"/>
<path d="M37.9 9.6 L41.8 13.2 L37.9 13.2 Z" fill="#222"/>
<rect x="34.3" y="14" width="5.5" height="1" fill="#333"/>
<rect x="34.3" y="16" width="5.5" height="1" fill="#333"/>
<rect x="34.3" y="18" width="5.5" height="1" fill="#333"/>
</svg>
<svg style="left:1329.75px;top:443.8px" width="13" height="13" viewBox="0 0 13 13"><circle cx="6.5" cy="6.5" r="6.4" fill="#6b6e73"/><path d="M2.6 6.6 L5.6 9.4 L10.8 4.3" stroke="#fff" stroke-width="1.6" fill="none"/></svg>
<svg style="left:1347px;top:443.5px" width="13" height="14" viewBox="0 0 13 14"><path d="M4.4 2.6 L4.4 0.9 L8.6 0.9 L8.6 2.6" stroke="#7a7e86" stroke-width="1" fill="none"/><rect x="0.1" y="2.3" width="12.5" height="1.2" fill="#7a7e86"/><path d="M1.4 3.4 L11.3 3.4 L11.1 13.3 L1.6 13.3 Z" fill="#7a7e86"/><rect x="3.8" y="4.7" width="0.9" height="7.5" fill="#dcdce0"/><rect x="6" y="4.7" width="0.9" height="7.5" fill="#dcdce0"/><rect x="8.2" y="4.7" width="0.9" height="7.5" fill="#dcdce0"/></svg>
<div class="b" style="left:199px;top:466px;width:1188px;height:31px;background:#dcdcdf"></div>
<div class="b" style="left:208px;top:476.2px;width:10px;height:10px;background:#fff;border:1px solid #6f6f6f;border-radius:2px"></div>
<div class="t" style="left:238.5px;top:478.04px;font-size:10px;line-height:10px;color:#111;letter-spacing:0.15px;">APG125LSd</div>
<div class="t" style="left:374.5px;top:478.04px;font-size:10px;line-height:10px;color:#111;letter-spacing:0.15px;">App G 120 Volume</div>
<div class="t" style="left:529.5px;top:478.04px;font-size:10px;line-height:10px;color:#111;letter-spacing:0.15px;">88765454465123</div>
<div class="t" style="left:643.5px;top:478.04px;font-size:10px;line-height:10px;color:#111;letter-spacing:0.15px;">Apple</div>
<div class="t" style="left:750.5px;top:478.04px;font-size:10px;line-height:10px;color:#111;letter-spacing:0.15px;">Gala</div>
<div class="t" style="left:843.5px;top:478.04px;font-size:10px;line-height:10px;color:#111;letter-spacing:0.15px;">Sally's Fruit</div>
<div class="t" style="left:989.5px;top:478.04px;font-size:10px;line-height:10px;color:#111;letter-spacing:0.15px;">Volume Fill</div>
<div class="t" style="left:1115.5px;top:478.04px;font-size:10px;line-height:10px;color:#111;letter-spacing:0.15px;">Small</div>
<div class="t" style="left:1208.5px;top:478.04px;font-size:10px;line-height:10px;color:#111;letter-spacing:0.15px;">Yes</div>
<svg style="left:1282px;top:466px" width="46" height="31" viewBox="0 0 46 31">
<g transform="translate(3.4 20.4) rotate(-41.5)">
<path d="M0.4 0 L3.4 -2.1 L16 -2.1 L16 2.1 L3.4 2.1 Z" fill="none" stroke="#222" stroke-width="1.2" stroke-linejoin="round"/>
<rect x="14.3" y="-2.7" width="2.4" height="5.4" fill="#222"/>
<rect x="12.2" y="-2.4" width="1" height="4.8" fill="#333"/>
<path d="M4.4 0 L11.6 0" stroke="#333" stroke-width="0.9"/>
<path d="M0 0 L2 -1.4 L2 1.4 Z" fill="#222"/>
</g>
<path d="M32.4 8.4 L29.9 5.75 L27.2 5.75 C26 5.75 25.15 6.6 25.15 7.8 L25.15 16.2 C25.15 17.4 26 18.35 27.2 18.35 L31.5 18.35" fill="none" stroke="#222" stroke-width="1.3"/>
<path d="M29.6 5.4 L32.9 8.8 L29.9 8.8 Z" fill="#222"/>
<rect x="27.2" y="10" width="3.2" height="1" fill="#333"/>
<rect x="27.2" y="12" width="3.2" height="1" fill="#333"/>
<rect x="27.2" y="14" width="3.2" height="1" fill="#333"/>
<path d="M34.5 9.45 L38.3 9.45 L41.95 13 L41.95 19.6 C41.95 20.9 41 21.85 39.8 21.85 L34.5 21.85 C33.3 21.85 32.25 20.9 32.25 19.6 L32.25 11.7 C32.25 10.5 33.3 9.45 34.5 9.45 Z" fill="#dcdcdf" stroke="#222" stroke-width="1.5"/>
<path d="M37.9 9.6 L41.8 13.2 L37.9 13.2 Z" fill="#222"/>
<rect x="34.3" y="14" width="5.5" height="1" fill="#333"/>
<rect x="34.3" y="16" width="5.5" height="1" fill="#333"/>
<rect x="34.3" y="18" width="5.5" height="1" fill="#333"/>
</svg>
<svg style="left:1329.75px;top:474.8px" width="13" height="13" viewBox="0 0 13 13"><circle cx="6.5" cy="6.5" r="6.4" fill="#6b6e73"/><path d="M2.6 6.6 L5.6 9.4 L10.8 4.3" stroke="#fff" stroke-width="1.6" fill="none"/></svg>
<svg style="left:1347px;top:474.5px" width="13" height="14" viewBox="0 0 13 14"><path d="M4.4 2.6 L4.4 0.9 L8.6 0.9 L8.6 2.6" stroke="#7a7e86" stroke-width="1" fill="none"/><rect x="0.1" y="2.3" width="12.5" height="1.2" fill="#7a7e86"/><path d="M1.4 3.4 L11.3 3.4 L11.1 13.3 L1.6 13.3 Z" fill="#7a7e86"/><rect x="3.8" y="4.7" width="0.9" height="7.5" fill="#dcdce0"/><rect x="6" y="4.7" width="0.9" height="7.5" fill="#dcdce0"/><rect x="8.2" y="4.7" width="0.9" height="7.5" fill="#dcdce0"/></svg>
<div class="b" style="left:199px;top:497px;width:1188px;height:31px;background:#ebebeb"></div>
<div class="b" style="left:208px;top:507.2px;width:10px;height:10px;background:#fff;border:1px solid #6f6f6f;border-radius:2px"></div>
<div class="t" style="left:238.5px;top:509.04px;font-size:10px;line-height:10px;color:#111;letter-spacing:0.15px;">APF125TPd</div>
<div class="t" style="left:374.5px;top:509.04px;font-size:10px;line-height:10px;color:#111;letter-spacing:0.15px;">AppF 120 Tray</div>
<div class="t" style="left:529.5px;top:509.04px;font-size:10px;line-height:10px;color:#111;letter-spacing:0.15px;">88765454465147</div>
<div class="t" style="left:643.5px;top:509.04px;font-size:10px;line-height:10px;color:#111;letter-spacing:0.15px;">Apple</div>
<div class="t" style="left:750.5px;top:509.04px;font-size:10px;line-height:10px;color:#111;letter-spacing:0.15px;">Fuji</div>
<div class="t" style="left:843.5px;top:509.04px;font-size:10px;line-height:10px;color:#111;letter-spacing:0.15px;">Sally's Fruit</div>
<div class="t" style="left:989.5px;top:509.04px;font-size:10px;line-height:10px;color:#111;letter-spacing:0.15px;">Tray Packed</div>
<div class="t" style="left:1115.5px;top:509.04px;font-size:10px;line-height:10px;color:#111;letter-spacing:0.15px;">Medium</div>
<div class="t" style="left:1208.5px;top:509.04px;font-size:10px;line-height:10px;color:#111;letter-spacing:0.15px;">Yes</div>
<svg style="left:1282px;top:497px" width="46" height="31" viewBox="0 0 46 31">
<g transform="translate(3.4 20.4) rotate(-41.5)">
<path d="M0.4 0 L3.4 -2.1 L16 -2.1 L16 2.1 L3.4 2.1 Z" fill="none" stroke="#222" stroke-width="1.2" stroke-linejoin="round"/>
<rect x="14.3" y="-2.7" width="2.4" height="5.4" fill="#222"/>
<rect x="12.2" y="-2.4" width="1" height="4.8" fill="#333"/>
<path d="M4.4 0 L11.6 0" stroke="#333" stroke-width="0.9"/>
<path d="M0 0 L2 -1.4 L2 1.4 Z" fill="#222"/>
</g>
<path d="M32.4 8.4 L29.9 5.75 L27.2 5.75 C26 5.75 25.15 6.6 25.15 7.8 L25.15 16.2 C25.15 17.4 26 18.35 27.2 18.35 L31.5 18.35" fill="none" stroke="#222" stroke-width="1.3"/>
<path d="M29.6 5.4 L32.9 8.8 L29.9 8.8 Z" fill="#222"/>
<rect x="27.2" y="10" width="3.2" height="1" fill="#333"/>
<rect x="27.2" y="12" width="3.2" height="1" fill="#333"/>
<rect x="27.2" y="14" width="3.2" height="1" fill="#333"/>
<path d="M34.5 9.45 L38.3 9.45 L41.95 13 L41.95 19.6 C41.95 20.9 41 21.85 39.8 21.85 L34.5 21.85 C33.3 21.85 32.25 20.9 32.25 19.6 L32.25 11.7 C32.25 10.5 33.3 9.45 34.5 9.45 Z" fill="#ebebeb" stroke="#222" stroke-width="1.5"/>
<path d="M37.9 9.6 L41.8 13.2 L37.9 13.2 Z" fill="#222"/>
<rect x="34.3" y="14" width="5.5" height="1" fill="#333"/>
<rect x="34.3" y="16" width="5.5" height="1" fill="#333"/>
<rect x="34.3" y="18" width="5.5" height="1" fill="#333"/>
</svg>
<svg style="left:1329.75px;top:505.8px" width="13" height="13" viewBox="0 0 13 13"><circle cx="6.5" cy="6.5" r="6.4" fill="#6b6e73"/><path d="M2.6 6.6 L5.6 9.4 L10.8 4.3" stroke="#fff" stroke-width="1.6" fill="none"/></svg>
<svg style="left:1347px;top:505.5px" width="13" height="14" viewBox="0 0 13 14"><path d="M4.4 2.6 L4.4 0.9 L8.6 0.9 L8.6 2.6" stroke="#7a7e86" stroke-width="1" fill="none"/><rect x="0.1" y="2.3" width="12.5" height="1.2" fill="#7a7e86"/><path d="M1.4 3.4 L11.3 3.4 L11.1 13.3 L1.6 13.3 Z" fill="#7a7e86"/><rect x="3.8" y="4.7" width="0.9" height="7.5" fill="#dcdce0"/><rect x="6" y="4.7" width="0.9" height="7.5" fill="#dcdce0"/><rect x="8.2" y="4.7" width="0.9" height="7.5" fill="#dcdce0"/></svg>
<div class="b" style="left:199px;top:528px;width:1188px;height:31px;background:#dcdcdf"></div>
<div class="b" style="left:208px;top:538.2px;width:10px;height:10px;background:#fff;border:1px solid #6f6f6f;border-radius:2px"></div>
<div class="t" style="left:238.5px;top:540.03px;font-size:10px;line-height:10px;color:#111;letter-spacing:0.15px;">APP1234X</div>
<div class="t" style="left:374.5px;top:540.03px;font-size:10px;line-height:10px;color:#111;letter-spacing:0.15px;">AppP 126 Tray</div>
<div class="t" style="left:529.5px;top:540.03px;font-size:10px;line-height:10px;color:#111;letter-spacing:0.15px;">88765454465093</div>
<div class="t" style="left:643.5px;top:540.03px;font-size:10px;line-height:10px;color:#111;letter-spacing:0.15px;">Apple</div>
<div class="t" style="left:750.5px;top:540.03px;font-size:10px;line-height:10px;color:#111;letter-spacing:0.15px;">Pippin</div>
<div class="t" style="left:843.5px;top:540.03px;font-size:10px;line-height:10px;color:#111;letter-spacing:0.15px;">Good Golly</div>
<div class="t" style="left:989.5px;top:540.03px;font-size:10px;line-height:10px;color:#111;letter-spacing:0.15px;">Tray Pack</div>
<div class="t" style="left:1115.5px;top:540.03px;font-size:10px;line-height:10px;color:#111;letter-spacing:0.15px;">Large</div>
<div class="t" style="left:1208.5px;top:540.03px;font-size:10px;line-height:10px;color:#111;letter-spacing:0.15px;">Yes</div>
<svg style="left:1282px;top:528px" width="46" height="31" viewBox="0 0 46 31">
<g transform="translate(3.4 20.4) rotate(-41.5)">
<path d="M0.4 0 L3.4 -2.1 L16 -2.1 L16 2.1 L3.4 2.1 Z" fill="none" stroke="#222" stroke-width="1.2" stroke-linejoin="round"/>
<rect x="14.3" y="-2.7" width="2.4" height="5.4" fill="#222"/>
<rect x="12.2" y="-2.4" width="1" height="4.8" fill="#333"/>
<path d="M4.4 0 L11.6 0" stroke="#333" stroke-width="0.9"/>
<path d="M0 0 L2 -1.4 L2 1.4 Z" fill="#222"/>
</g>
<path d="M32.4 8.4 L29.9 5.75 L27.2 5.75 C26 5.75 25.15 6.6 25.15 7.8 L25.15 16.2 C25.15 17.4 26 18.35 27.2 18.35 L31.5 18.35" fill="none" stroke="#222" stroke-width="1.3"/>
<path d="M29.6 5.4 L32.9 8.8 L29.9 8.8 Z" fill="#222"/>
<rect x="27.2" y="10" width="3.2" height="1" fill="#333"/>
<rect x="27.2" y="12" width="3.2" height="1" fill="#333"/>
<rect x="27.2" y="14" width="3.2" height="1" fill="#333"/>
<path d="M34.5 9.45 L38.3 9.45 L41.95 13 L41.95 19.6 C41.95 20.9 41 21.85 39.8 21.85 L34.5 21.85 C33.3 21.85 32.25 20.9 32.25 19.6 L32.25 11.7 C32.25 10.5 33.3 9.45 34.5 9.45 Z" fill="#dcdcdf" stroke="#222" stroke-width="1.5"/>
<path d="M37.9 9.6 L41.8 13.2 L37.9 13.2 Z" fill="#222"/>
<rect x="34.3" y="14" width="5.5" height="1" fill="#333"/>
<rect x="34.3" y="16" width="5.5" height="1" fill="#333"/>
<rect x="34.3" y="18" width="5.5" height="1" fill="#333"/>
</svg>
<svg style="left:1329.75px;top:536.8px" width="13" height="13" viewBox="0 0 13 13"><circle cx="6.5" cy="6.5" r="6.4" fill="#6b6e73"/><path d="M2.6 6.6 L5.6 9.4 L10.8 4.3" stroke="#fff" stroke-width="1.6" fill="none"/></svg>
<svg style="left:1347px;top:536.5px" width="13" height="14" viewBox="0 0 13 14"><path d="M4.4 2.6 L4.4 0.9 L8.6 0.9 L8.6 2.6" stroke="#7a7e86" stroke-width="1" fill="none"/><rect x="0.1" y="2.3" width="12.5" height="1.2" fill="#7a7e86"/><path d="M1.4 3.4 L11.3 3.4 L11.1 13.3 L1.6 13.3 Z" fill="#7a7e86"/><rect x="3.8" y="4.7" width="0.9" height="7.5" fill="#dcdce0"/><rect x="6" y="4.7" width="0.9" height="7.5" fill="#dcdce0"/><rect x="8.2" y="4.7" width="0.9" height="7.5" fill="#dcdce0"/></svg>
<div class="b" style="left:199px;top:559px;width:1188px;height:31px;background:#ebebeb"></div>
<div class="b" style="left:208px;top:569.2px;width:10px;height:10px;background:#fff;border:1px solid #6f6f6f;border-radius:2px"></div>
<div class="t" style="left:238.5px;top:571.03px;font-size:10px;line-height:10px;color:#111;letter-spacing:0.15px;">APP1234</div>
<div class="t" style="left:374.5px;top:571.03px;font-size:10px;line-height:10px;color:#111;letter-spacing:0.15px;">AppP 126 Tray</div>
<div class="t" style="left:529.5px;top:571.03px;font-size:10px;line-height:10px;color:#111;letter-spacing:0.15px;">88765464465090</div>
<div class="t" style="left:643.5px;top:571.03px;font-size:10px;line-height:10px;color:#111;letter-spacing:0.15px;">Apple</div>
<div class="t" style="left:750.5px;top:571.03px;font-size:10px;line-height:10px;color:#111;letter-spacing:0.15px;">Pippin</div>
<div class="t" style="left:843.5px;top:571.03px;font-size:10px;line-height:10px;color:#111;letter-spacing:0.15px;">Sally's Fruit</div>
<div class="t" style="left:989.5px;top:571.03px;font-size:10px;line-height:10px;color:#111;letter-spacing:0.15px;">Tray Pack</div>
<div class="t" style="left:1115.5px;top:571.03px;font-size:10px;line-height:10px;color:#111;letter-spacing:0.15px;">Medium</div>
<div class="t" style="left:1208.5px;top:571.03px;font-size:10px;line-height:10px;color:#111;letter-spacing:0.15px;">Yes</div>
<svg style="left:1282px;top:559px" width="46" height="31" viewBox="0 0 46 31">
<g transform="translate(3.4 20.4) rotate(-41.5)">
<path d="M0.4 0 L3.4 -2.1 L16 -2.1 L16 2.1 L3.4 2.1 Z" fill="none" stroke="#222" stroke-width="1.2" stroke-linejoin="round"/>
<rect x="14.3" y="-2.7" width="2.4" height="5.4" fill="#222"/>
<rect x="12.2" y="-2.4" width="1" height="4.8" fill="#333"/>
<path d="M4.4 0 L11.6 0" stroke="#333" stroke-width="0.9"/>
<path d="M0 0 L2 -1.4 L2 1.4 Z" fill="#222"/>
</g>
<path d="M32.4 8.4 L29.9 5.75 L27.2 5.75 C26 5.75 25.15 6.6 25.15 7.8 L25.15 16.2 C25.15 17.4 26 18.35 27.2 18.35 L31.5 18.35" fill="none" stroke="#222" stroke-width="1.3"/>
<path d="M29.6 5.4 L32.9 8.8 L29.9 8.8 Z" fill="#222"/>
<rect x="27.2" y="10" width="3.2" height="1" fill="#333"/>
<rect x="27.2" y="12" width="3.2" height="1" fill="#333"/>
<rect x="27.2" y="14" width="3.2" height="1" fill="#333"/>
<path d="M34.5 9.45 L38.3 9.45 L41.95 13 L41.95 19.6 C41.95 20.9 41 21.85 39.8 21.85 L34.5 21.85 C33.3 21.85 32.25 20.9 32.25 19.6 L32.25 11.7 C32.25 10.5 33.3 9.45 34.5 9.45 Z" fill="#ebebeb" stroke="#222" stroke-width="1.5"/>
<path d="M37.9 9.6 L41.8 13.2 L37.9 13.2 Z" fill="#222"/>
<rect x="34.3" y="14" width="5.5" height="1" fill="#333"/>
<rect x="34.3" y="16" width="5.5" height="1" fill="#333"/>
<rect x="34.3" y="18" width="5.5" height="1" fill="#333"/>
</svg>
<svg style="left:1329.75px;top:567.8px" width="13" height="13" viewBox="0 0 13 13"><circle cx="6.5" cy="6.5" r="6.4" fill="#6b6e73"/><path d="M2.6 6.6 L5.6 9.4 L10.8 4.3" stroke="#fff" stroke-width="1.6" fill="none"/></svg>
<svg style="left:1347px;top:567.5px" width="13" height="14" viewBox="0 0 13 14"><path d="M4.4 2.6 L4.4 0.9 L8.6 0.9 L8.6 2.6" stroke="#7a7e86" stroke-width="1" fill="none"/><rect x="0.1" y="2.3" width="12.5" height="1.2" fill="#7a7e86"/><path d="M1.4 3.4 L11.3 3.4 L11.1 13.3 L1.6 13.3 Z" fill="#7a7e86"/><rect x="3.8" y="4.7" width="0.9" height="7.5" fill="#dcdce0"/><rect x="6" y="4.7" width="0.9" height="7.5" fill="#dcdce0"/><rect x="8.2" y="4.7" width="0.9" height="7.5" fill="#dcdce0"/></svg>
<div class="b" style="left:205px;top:604px;width:26px;height:26px;background:#fff;border:1px solid #d3d8de"></div>
<svg style="left:215px;top:611.8px" width="6" height="6.5" viewBox="0 0 6 6.5"><rect x="0" y="0" width="1.3" height="6.5" fill="#a5a5a5"/><path d="M6 0 L1.8 3.25 L6 6.5 Z" fill="#a5a5a5"/></svg>
<div class="b" style="left:231px;top:604px;width:26px;height:26px;background:#fff;border:1px solid #d3d8de"></div>
<svg style="left:241px;top:611.8px" width="6" height="6.5" viewBox="0 0 6 6.5"><path d="M4.5 0 L0.5 3.25 L4.5 6.5 Z" fill="#a5a5a5"/></svg>
<div class="b" style="left:257px;top:604px;width:26px;height:26px;background:#fff;border:1px solid #d3d8de"></div>
<div class="b" style="left:258px;top:605px;width:24px;height:24px;background:#0042e0"></div>
<div class="t" style="left:257.0px;width:26px;text-align:center;top:611.19px;font-size:11px;line-height:11px;color:#fff;letter-spacing:0.2px;">1</div>
<div class="b" style="left:283px;top:604px;width:26px;height:26px;background:#fff;border:1px solid #d3d8de"></div>
<div class="t" style="left:283.0px;width:26px;text-align:center;top:611.19px;font-size:11px;line-height:11px;color:#e8000b;letter-spacing:0.2px;">2</div>
<div class="b" style="left:309px;top:604px;width:26px;height:26px;background:#fff;border:1px solid #d3d8de"></div>
<div class="t" style="left:309.0px;width:26px;text-align:center;top:611.19px;font-size:11px;line-height:11px;color:#e8000b;letter-spacing:0.2px;">3</div>
<div class="b" style="left:335px;top:604px;width:26px;height:26px;background:#fff;border:1px solid #d3d8de"></div>
<div class="t" style="left:335.0px;width:26px;text-align:center;top:611.19px;font-size:11px;line-height:11px;color:#e8000b;letter-spacing:0.2px;">4</div>
<div class="b" style="left:361px;top:604px;width:26px;height:26px;background:#fff;border:1px solid #d3d8de"></div>
<div class="t" style="left:361.0px;width:26px;text-align:center;top:611.19px;font-size:11px;line-height:11px;color:#e8000b;letter-spacing:0.2px;">5</div>
<div class="b" style="left:387px;top:604px;width:26px;height:26px;background:#fff;border:1px solid #d3d8de"></div>
<div class="t" style="left:387.0px;width:26px;text-align:center;top:611.19px;font-size:11px;line-height:11px;color:#e8000b;letter-spacing:0.2px;">6</div>
<div class="b" style="left:413px;top:604px;width:26px;height:26px;background:#fff;border:1px solid #d3d8de"></div>
<div class="t" style="left:413.0px;width:26px;text-align:center;top:611.19px;font-size:11px;line-height:11px;color:#e8000b;letter-spacing:0.2px;">7</div>
<div class="b" style="left:439px;top:604px;width:26px;height:26px;background:#fff;border:1px solid #d3d8de"></div>
<div class="t" style="left:439.0px;width:26px;text-align:center;top:611.19px;font-size:11px;line-height:11px;color:#e8000b;letter-spacing:0.2px;">8</div>
<div class="b" style="left:465px;top:604px;width:26px;height:26px;background:#fff;border:1px solid #d3d8de"></div>
<div class="t" style="left:465.0px;width:26px;text-align:center;top:611.19px;font-size:11px;line-height:11px;color:#e8000b;letter-spacing:0.2px;">9</div>
<div class="b" style="left:491px;top:604px;width:26px;height:26px;background:#fff;border:1px solid #d3d8de"></div>
<div class="t" style="left:491.0px;width:26px;text-align:center;top:611.19px;font-size:11px;line-height:11px;color:#e8000b;letter-spacing:0.2px;">10</div>
<div class="b" style="left:517px;top:604px;width:26px;height:26px;background:#fff;border:1px solid #d3d8de"></div>
<div class="t" style="left:517.0px;width:26px;text-align:center;top:611.19px;font-size:11px;line-height:11px;color:#e8000b;letter-spacing:0.2px;">...</div>
<div class="b" style="left:543px;top:604px;width:26px;height:26px;background:#fff;border:1px solid #d3d8de"></div>
<svg style="left:553px;top:611.8px" width="6" height="6.5" viewBox="0 0 6 6.5"><path d="M1.5 0 L5.5 3.25 L1.5 6.5 Z" fill="#555"/></svg>
<div class="b" style="left:569px;top:604px;width:26px;height:26px;background:#fff;border:1px solid #d3d8de"></div>
<svg style="left:579px;top:611.8px" width="6" height="6.5" viewBox="0 0 6 6.5"><path d="M0 0 L4.2 3.25 L0 6.5 Z" fill="#555"/><rect x="4.7" y="0" width="1.3" height="6.5" fill="#555"/></svg>
<div class="b" style="left:612px;top:604px;width:49px;height:26px;background:#fff;border:1px solid #cfd5dc"></div>
<div class="t" style="left:624.3px;top:611.69px;font-size:11px;line-height:11px;color:#111;">8</div>
<svg style="left:646px;top:614px" width="10" height="6.5" viewBox="0 0 10 6.5"><path d="M1 1 L5 5 L9 1" stroke="#111" stroke-width="2" fill="none"/></svg>
<div class="t" style="left:667.5px;top:611.69px;font-size:11px;line-height:11px;color:#555;letter-spacing:0.05px;">items per page</div>
<div class="t" style="left:970px;width:400px;text-align:right;top:612.19px;font-size:11px;line-height:11px;color:#555;letter-spacing:0.1px;">1 - 8 of 97 items</div>
<div class="b" style="left:0px;top:676px;width:1588px;height:8px;background:linear-gradient(rgba(0,0,0,0),rgba(0,0,0,.12))"></div>
<div class="b" style="left:0px;top:684px;width:1588px;height:36px;background:#d0241f"></div>
<div class="t" style="left:351.5px;width:900px;text-align:center;top:699.69px;font-size:11px;line-height:11px;font-weight:bold;color:#fff;letter-spacing:-0.28px;">This product cannot be deleted. There are already pack runs that utilized this product.</div>
<svg style="left:1576.8px;top:698.8px" width="9" height="9" viewBox="0 0 9 9"><path d="M1.6 1.6 L7.4 7.4 M7.4 1.6 L1.6 7.4" stroke="#f8dede" stroke-width="2.9" stroke-linecap="round"/></svg>
<div class="b" style="left:0px;top:720px;width:1588px;height:32px;background:#00821e"></div>
<div class="b" style="left:0px;top:720px;width:1588px;height:3px;background:linear-gradient(#0a8a3a,#00821e)"></div>
<div class="t" style="left:592.5px;width:400px;text-align:center;top:722.38px;font-size:9px;line-height:9px;color:#fff;">&#169; Copyright 2021 RedLine Solutions, Inc. Version: 4.0.51</div>
<div class="t" style="left:593.0px;width:400px;text-align:center;top:740.38px;font-size:9px;line-height:9px;color:#fff;letter-spacing:0.07px;">Trademark Notice | Privacy Policy | Terms of Use</div>
</body></html>
